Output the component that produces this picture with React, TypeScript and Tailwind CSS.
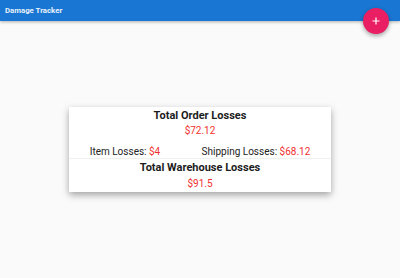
import React from "react";

export default function App() {
  return (
    <div
      className="relative flex min-h-screen w-full flex-col bg-[#fafafa]"
      style={{ fontFamily: "Roboto, 'Liberation Sans', sans-serif" }}
    >
      <header className="relative z-10 flex h-[21px] items-center bg-[#1976d2] px-[5px] shadow-[0_1px_3px_rgba(0,0,0,0.3)]">
        <span className="text-[7.8px] font-bold leading-none text-[#e8f1fb]">Damage Tracker</span>
      </header>
      <button className="absolute left-[363px] top-[8px] z-20 flex h-[26px] w-[26px] items-center justify-center rounded-full bg-[#e91e63] shadow-[0_2px_4px_rgba(0,0,0,0.35)]">
        <svg width="8" height="8" viewBox="0 0 8 8">
          <path d="M4 0.5V7.5M0.5 4H7.5" stroke="#fff" strokeWidth="1.2" />
        </svg>
      </button>
      <main className="flex flex-1 items-center justify-center">
        <div className="flex w-[262px] flex-col bg-white pb-[1px] pt-[2px] text-center shadow-[0_3px_7px_rgba(0,0,0,0.35)]">
          <div className="h-[14px] text-[11px] font-bold leading-[14px] text-[#1c1c1c]">Total Order Losses</div>
          <div className="mt-[1px] h-[14px] text-[10px] leading-[14px] text-[#f0302f]">$72.12</div>
          <div className="mt-[7px] flex h-[13px] justify-around text-[10px] leading-[13px] text-[#222]">
            <span>
              Item Losses: <span className="text-[#f0302f]">$4</span>
            </span>
            <span>
              Shipping Losses: <span className="text-[#f0302f]">$68.12</span>
            </span>
          </div>
          <div className="h-px bg-[#f0f0f0]" />
          <div className="mt-[2px] h-[14px] text-[11px] font-bold leading-[14px] text-[#1c1c1c]">Total Warehouse Losses</div>
          <div className="mt-[2px] h-[14px] text-[10px] leading-[14px] text-[#f0302f]">$91.5</div>
        </div>
      </main>
    </div>
  );
}
